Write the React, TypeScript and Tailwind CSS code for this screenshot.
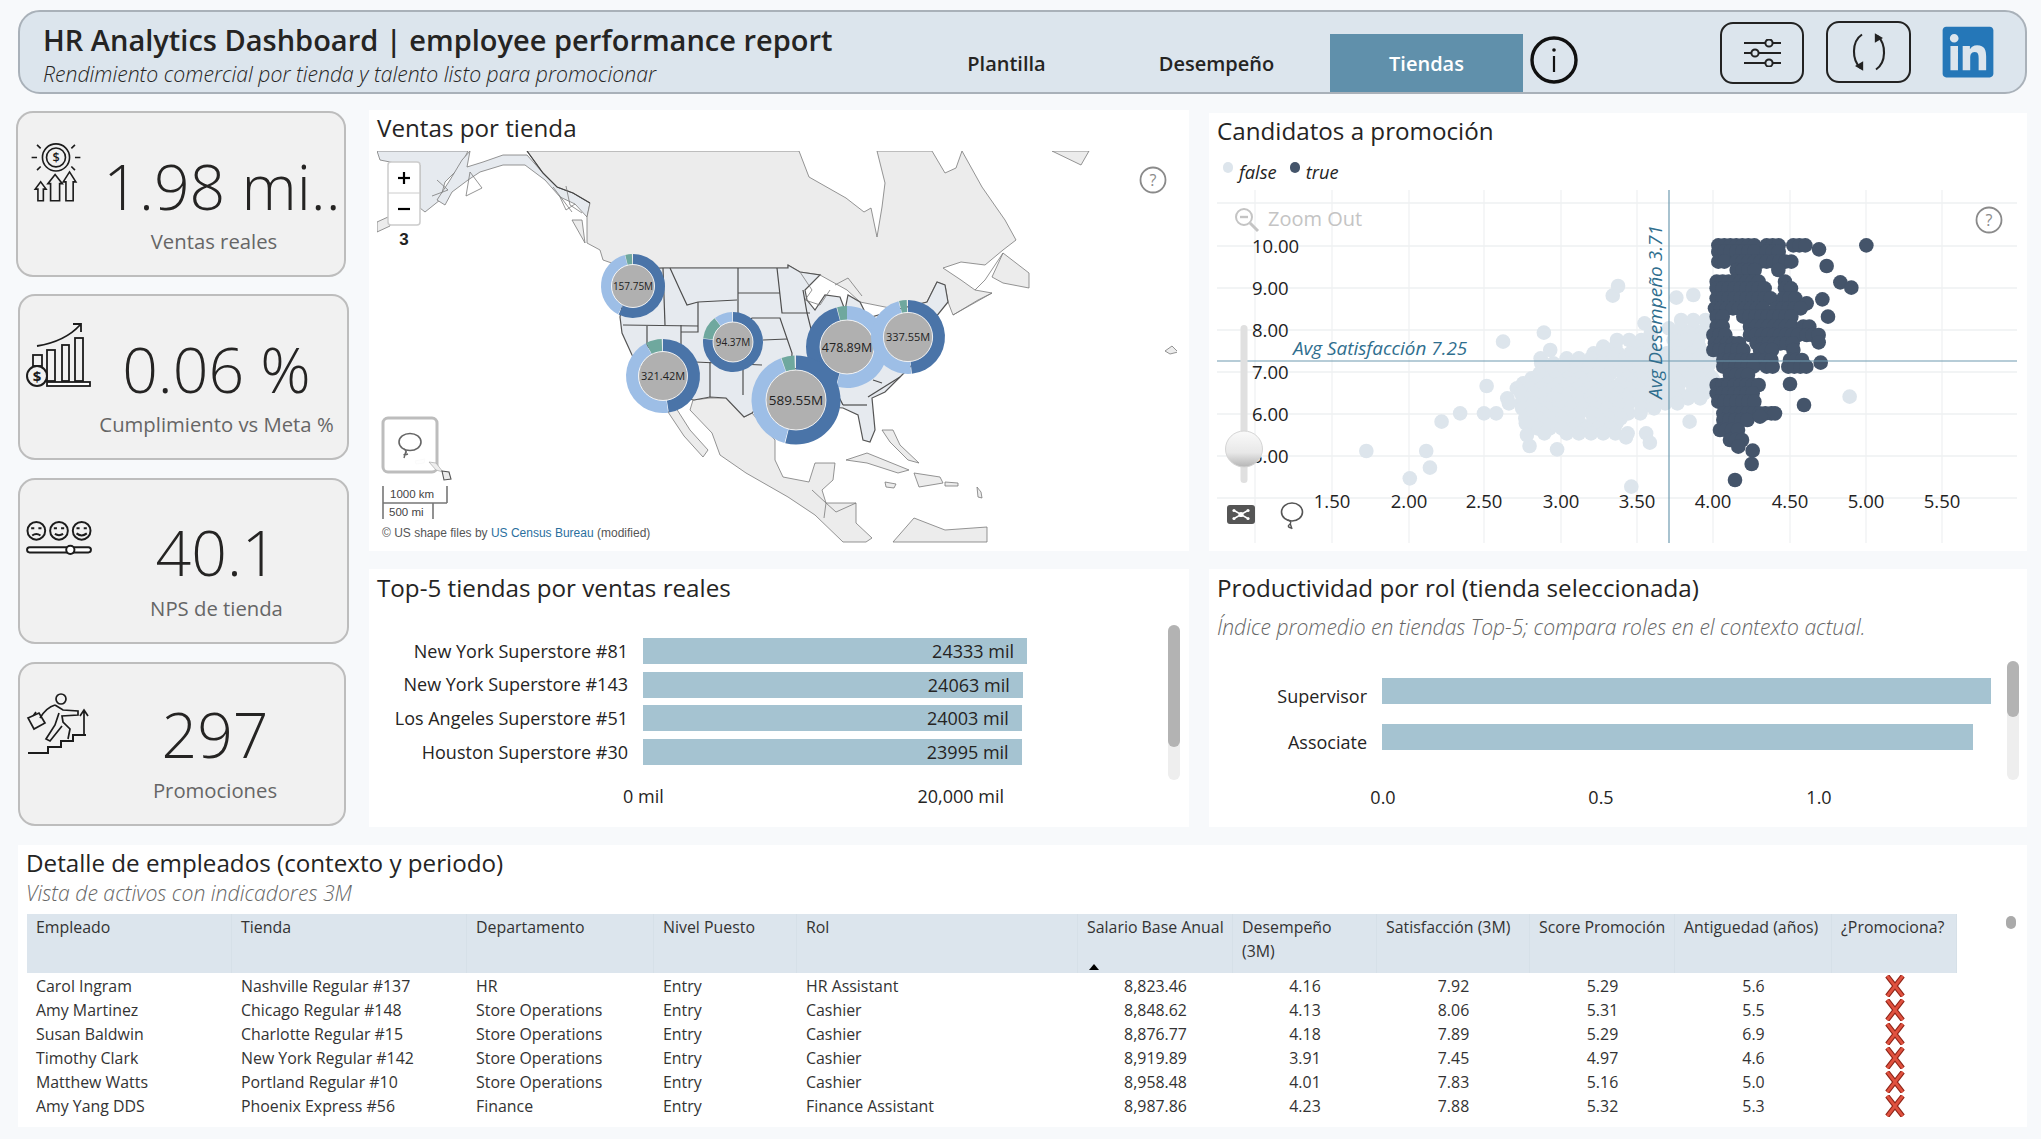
import { FaLinkedin } from "react-icons/fa";

const land = "#ececec";
const states = "#e6eaef";
const coast = "#7a7a7a";

const canada =
  "527,151 543,173 557,187 573,193 590,203 587,217 587,243 600,250 603,260 623,267 663,268 788,268 788,265 800,272 820,275 847,290 860,302 875,305 900,310 927,302 937,282 945,285 948,302 953,315 992,293 975,290 961,280 943,268 961,262 985,265 1003,250 1016,240 1005,220 982,187 962,151 956,168 945,173 932,151 877,151 885,183 882,207 877,237 871,208 864,212 846,198 809,177 799,151";
const alaska =
  "377,151 468,151 460,167 445,182 440,200 425,212 420,208 420,165 395,163 380,160";
const panhandle =
  "470,151 467,167 483,162 503,155 527,155 543,173 557,187 573,193 590,203 587,217 575,204 560,197 545,180 525,165 503,165 480,172 468,180 452,192 445,205 437,200 450,180 462,160";
const conus =
  "663,268 788,268 788,265 800,272 820,275 805,290 807,300 815,310 825,295 840,297 845,310 848,295 860,302 868,318 895,310 927,302 937,282 945,285 948,302 935,318 928,340 912,365 900,377 885,392 872,398 875,430 870,442 863,440 858,415 843,408 800,405 790,410 760,405 752,413 744,417 726,398 710,397 694,400 665,395 650,380 632,355 622,333 620,317 625,290 630,270";
const mexico =
  "693,400 710,398 726,398 744,417 752,413 775,440 775,460 783,477 809,482 815,463 835,463 833,480 822,490 826,503 856,503 856,523 872,538 866,542 843,542 815,515 788,497 746,473 720,455 712,433 690,410";
const baja = "668,412 676,408 690,430 708,450 703,457 684,436";
const islands = [
  "846,460 867,453 909,470 898,473 867,463",
  "914,473 940,477 943,483 919,487",
  "945,482 958,483 958,486 945,486",
  "885,482 896,484 894,488 886,487",
  "882,430 893,430 900,445 919,463 908,460 890,442",
  "977,487 981,492 982,498 978,497",
  "893,542 914,518 945,530 987,527 987,542",
  "1003,253 1029,273 1029,288 1003,283 992,277",
  "1052,151 1081,165 1089,151",
  "1165,351 1172,346 1178,352 1170,354",
  "572,220 582,220 585,243",
  "377,222 388,217 390,226 377,232",
];
const stateLines = [
  "623,325 698,326",
  "647,326 647,345 690,400",
  "663,268 665,325",
  "670,268 680,290 687,305 698,302",
  "698,302 737,300",
  "698,302 698,332 681,332",
  "681,325 681,362 695,362 762,365",
  "738,268 738,330 752,318 780,318 792,353 790,410",
  "738,293 780,293",
  "777,268 782,313 810,313",
  "763,340 787,339",
  "710,362 710,397",
  "743,363 743,395",
  "803,290 807,313 815,345 825,370 843,405",
  "900,377 868,397",
  "873,380 882,383",
  "843,405 867,405",
  "790,370 860,355 905,350",
  "830,318 835,345",
  "880,318 885,340 925,325",
];
const fjords = [
  "560,197 566,210 575,204",
  "566,186 570,205 582,213",
  "553,187 572,212",
  "470,172 482,188 466,196 470,172",
  "437,180 448,190 432,196",
  "800,272 812,290 805,300 820,305 830,290",
  "835,285 848,278 862,296",
  "1003,253 985,280 975,290",
  "953,315 978,300 992,293",
];

type Slice = { to: number; fill: string };
const dark = "#4a74a8";
const light = "#9dbee6";
const teal = "#6fa89e";

const donuts: { cx: number; cy: number; r: number; r0: number; label: string; size: number; slices: Slice[] }[] = [
  { cx: 633, cy: 286, r: 32, r0: 21.5, label: "157.75M", size: 10, slices: [{ to: 207, fill: dark }, { to: 345, fill: light }, { to: 358, fill: teal }] },
  { cx: 733, cy: 342, r: 30, r0: 20, label: "94.37M", size: 10, slices: [{ to: 276, fill: dark }, { to: 322, fill: teal }, { to: 358, fill: light }] },
  { cx: 663, cy: 376, r: 37, r0: 24.5, label: "321.42M", size: 11, slices: [{ to: 171, fill: dark }, { to: 332, fill: light }, { to: 358, fill: teal }] },
  { cx: 847, cy: 347, r: 41, r0: 27, label: "478.89M", size: 12.5, slices: [{ to: 195, fill: light }, { to: 345, fill: dark }, { to: 360, fill: teal }] },
  { cx: 908, cy: 337, r: 37, r0: 24.6, label: "337.55M", size: 11, slices: [{ to: 174, fill: dark }, { to: 345, fill: light }, { to: 358, fill: teal }] },
  { cx: 796, cy: 400, r: 44.5, r0: 30, label: "589.55M", size: 13.5, slices: [{ to: 194, fill: dark }, { to: 340, fill: light }, { to: 358, fill: teal }] },
];

function polar(cx: number, cy: number, r: number, deg: number) {
  const a = ((deg - 90) * Math.PI) / 180;
  return `${cx + r * Math.cos(a)} ${cy + r * Math.sin(a)}`;
}

function sector(cx: number, cy: number, r: number, r0: number, from: number, to: number) {
  const big = to - from > 180 ? 1 : 0;
  return `M${polar(cx, cy, r, from)} A${r} ${r} 0 ${big} 1 ${polar(cx, cy, r, to)} L${polar(cx, cy, r0, to)} A${r0} ${r0} 0 ${big} 0 ${polar(cx, cy, r0, from)} Z`;
}

function MapChart() {
  return (
    <svg viewBox="377 151 800 392" className="ml-[8px] mt-[6px] block h-[392px] w-[800px]">
      <polygon points={alaska} fill={states} stroke={coast} strokeWidth="0.8" />
      <polygon points={panhandle} fill={states} stroke={coast} strokeWidth="0.8" />
      <polygon points={canada} fill={land} stroke={coast} strokeWidth="0.8" />
      <polyline points="527,151 543,173 557,187 573,193 590,203" fill="none" stroke="#444" strokeWidth="1.2" />
      <polygon points={mexico} fill={land} stroke={coast} strokeWidth="0.8" />
      <polygon points={baja} fill={land} stroke={coast} strokeWidth="0.8" />
      <polygon points={conus} fill={states} stroke="#555" strokeWidth="1.2" />
      {islands.map((p) => (
        <polygon key={p} points={p} fill={land} stroke={coast} strokeWidth="0.8" />
      ))}
      {stateLines.map((p) => (
        <polyline key={p} points={p} fill="none" stroke="#4d4d4d" strokeWidth="1.2" />
      ))}
      {fjords.map((p) => (
        <polyline key={p} points={p} fill="none" stroke={coast} strokeWidth="0.8" />
      ))}
      <polyline points="826,503 836,512 856,503" fill="none" stroke={coast} strokeWidth="0.8" />
      <polyline points="812,490 826,503 824,518" fill="none" stroke={coast} strokeWidth="0.8" />

      {donuts.map((d) => {
        let from = 0;
        return (
          <g key={d.label}>
            {d.slices.map((s) => {
              const path = sector(d.cx, d.cy, d.r, d.r0, from, s.to);
              from = s.to + 1;
              return <path key={s.to} d={path} fill={s.fill} />;
            })}
            <circle cx={d.cx} cy={d.cy} r={d.r0} fill="#b0b0b0" stroke="#fff" strokeWidth="0.8" />
            <text x={d.cx} y={d.cy + d.size * 0.36} textAnchor="middle" fontSize={d.size} fill="#222">
              {d.label}
            </text>
          </g>
        );
      })}

      <rect x="388" y="162" width="32" height="63" rx="3" fill="#fff" stroke="#ccc" strokeWidth="1.5" />
      <line x1="388" y1="193" x2="420" y2="193" stroke="#ccc" />
      <line x1="398" y1="178" x2="410" y2="178" stroke="#000" strokeWidth="2.2" />
      <line x1="404" y1="172" x2="404" y2="184" stroke="#000" strokeWidth="2.2" />
      <line x1="398" y1="209" x2="410" y2="209" stroke="#000" strokeWidth="2.2" />
      <text x="404" y="245" textAnchor="middle" fontSize="17" fontWeight="700" fill="#222" className="font-['Liberation_Sans',sans-serif]">
        3
      </text>

      <polygon points="415,461 425,459 424,463 416,464" fill="#f4f4f4" stroke="#bbb" strokeWidth="0.7" />
      <rect x="383" y="418" width="54" height="54" rx="5" fill="#fff" fillOpacity="0.9" stroke="#bdbdbd" strokeWidth="3" />
      <ellipse cx="410" cy="442" rx="11" ry="8.5" fill="none" stroke="#666" strokeWidth="1.6" />
      <path d="M404 449 q4 3 1 5 q-3 2 3 0 M406 451 l-2 7" fill="none" stroke="#666" strokeWidth="1.4" />
      <polygon points="429,462 436,463 443,472 436,470" fill="#eee" stroke="#aaa" strokeWidth="0.7" />
      <polygon points="442,471 449,472 451,479 444,480" fill={land} stroke="#555" strokeWidth="1.1" />

      <path d="M383 486 V519 M383 503 H447 M447 486 V503 M433 503 V519" fill="none" stroke="#777" strokeWidth="1.6" />
      <g fontSize="11.5" fill="#444" className="font-['Liberation_Sans',sans-serif]">
        <text x="390" y="498">1000 km</text>
        <text x="389" y="516">500 mi</text>
      </g>
      <text x="382" y="537" fontSize="12" fill="#555" className="font-['Liberation_Sans',sans-serif]">
        © US shape files by <tspan fill="#2a6f9e">US Census Bureau</tspan> (modified)
      </text>

      <Help cx={1153} cy={180} />
    </svg>
  );
}

function Help({ cx, cy }: { cx: number; cy: number }) {
  return (
    <g>
      <circle cx={cx} cy={cy} r="12.5" fill="#fff" stroke="#8a8a8a" strokeWidth="1.8" />
      <text x={cx} y={cy + 6} textAnchor="middle" fontSize="16" fill="#8a8a8a">
        ?
      </text>
    </g>
  );
}

type Span = [number, number, number];

// blobs of points, read off the reference and filled along rows
const lightSpans: Span[] = [
  [510, 880, 940], [535, 860, 940], [550, 830, 830], [550, 880, 940], [570, 770, 830], [570, 880, 940], [590, 750, 840],
  [590, 870, 940], [610, 720, 940], [625, 630, 650], [625, 680, 950], [640, 625, 950], [655, 640, 950], [670, 630, 950],
  [685, 610, 950], [700, 590, 950], [715, 575, 950], [730, 580, 950], [745, 570, 930], [760, 570, 900], [775, 590, 850],
  [790, 510, 550], [790, 600, 820], [805, 600, 790], [820, 600, 780], [835, 620, 770], [850, 640, 790], [850, 820, 820],
];
const lightSingles = [
  [760, 437], [770, 408], [630, 548], [553, 575], [522, 708], [437, 815], [472, 790], [295, 903], [408, 903],
  [415, 953], [377, 985], [795, 1010], [655, 898], [603, 888], [830, 878], [905, 815], [1207, 740], [880, 443], [912, 435],
  [820, 520], [642, 600], [596, 820], [598, 855], [785, 862],
];
const darkSpans: Span[] = [
  [76, 175, 290], [76, 320, 370], [76, 400, 450], [95, 175, 290], [95, 320, 370], [125, 175, 195], [125, 230, 320],
  [125, 340, 405], [150, 230, 300], [150, 355, 355], [185, 170, 300], [185, 375, 375], [205, 170, 320], [205, 375, 405],
  [235, 170, 340], [235, 370, 420], [250, 440, 440], [265, 165, 320], [265, 350, 430], [290, 170, 200], [290, 250, 400],
  [320, 170, 195], [320, 270, 400], [320, 430, 460], [345, 160, 205], [345, 270, 420], [345, 440, 490], [370, 165, 240],
  [370, 290, 400], [390, 160, 250], [390, 300, 350], [390, 400, 400], [420, 190, 340], [420, 390, 430], [440, 190, 290],
  [440, 320, 340], [440, 385, 440], [465, 210, 280], [495, 170, 300], [520, 170, 290], [545, 175, 300], [580, 190, 340],
  [600, 190, 270], [630, 180, 250], [660, 210, 260],
];
const darkSingles = [
  [619, 76], [477, 88], [500, 138], [541, 187], [574, 203], [487, 238], [504, 290], [432, 555], [390, 492], [278, 692],
  [275, 732], [225, 780], [482, 428], [476, 367], [345, 580], [300, 590], [235, 680],
];

function fill(spans: Span[], step: number, jitter = 0) {
  const out: number[][] = [];
  let n = 0;
  for (const [y, a, b] of spans) {
    for (let x = a; x <= b; x += step) {
      n += 1;
      out.push([x + (jitter ? ((n * 37) % (jitter * 2 + 1)) - jitter : 0), y]);
    }
  }
  return out;
}

const lightPts = [...fill(lightSpans, 24, 9), ...lightSingles].map(([x, y]) => [1210 + x / 1.887, 150 + y / 3]);
const darkPts = [...fill(darkSpans, 18), ...darkSingles].map(([x, y]) => [1660 + x / 3, 220 + y / 3]);

const xTicks = [
  { x: 1332, t: "1.50" }, { x: 1409, t: "2.00" }, { x: 1484, t: "2.50" }, { x: 1561, t: "3.00" },
  { x: 1637, t: "3.50" }, { x: 1713, t: "4.00" }, { x: 1790, t: "4.50" }, { x: 1866, t: "5.00" }, { x: 1942, t: "5.50" },
];
const yTicks = [
  { y: 246, t: "10.00" }, { y: 288, t: "9.00" }, { y: 330, t: "8.00" }, { y: 372, t: "7.00" },
  { y: 414, t: "6.00" }, { y: 456, t: "5.00" },
];

function ScatterChart() {
  return (
    <svg viewBox="1209 190 818 361" className="mt-[5px] block h-[361px] w-[818px]">
      <defs>
        <linearGradient id="thumb" x1="0" y1="0" x2="0" y2="1">
          <stop offset="0" stopColor="#fafafa" />
          <stop offset="0.6" stopColor="#e8e8e8" />
          <stop offset="1" stopColor="#b5b5b5" />
        </linearGradient>
      </defs>
      {[1255, ...xTicks.map((t) => t.x)].map((x) => (
        <line key={x} x1={x} y1="190" x2={x} y2="543" stroke="#eef0f2" strokeWidth="1.2" />
      ))}
      {[203, 498, ...yTicks.map((t) => t.y)].map((y) => (
        <line key={y} x1="1217" y1={y} x2="2017" y2={y} stroke="#eef0f2" strokeWidth="1.6" />
      ))}
      {lightPts.map(([x, y], i) => (
        <circle key={i} cx={x} cy={y} r="7.3" fill="#dde5ec" />
      ))}
      {darkPts.map(([x, y], i) => (
        <circle key={i} cx={x} cy={y} r="7.3" fill="#44546a" />
      ))}
      <line x1="1669" y1="190" x2="1669" y2="543" stroke="#6e9ab0" strokeWidth="1.2" />
      <line x1="1217" y1="361" x2="2017" y2="361" stroke="#6e9ab0" strokeWidth="1.2" />
      <text x="1293" y="355" fontSize="18.9" fontStyle="italic" fill="#2f6e8e">
        Avg Satisfacción 7.25
      </text>
      <text
        transform="translate(1662 399) rotate(-90)"
        fontSize="18"
        fontStyle="italic"
        fill="#2f6e8e"
        textLength="174"
        lengthAdjust="spacingAndGlyphs"
      >
        Avg Desempeño 3.71
      </text>

      {yTicks.map((t) => (
        <text key={t.t} x="1252" y={t.y + 7} fontSize="18.5" fill="#222">
          {t.t}
        </text>
      ))}
      {xTicks.map((t) => (
        <text key={t.t} x={t.x} y="508" textAnchor="middle" fontSize="18.5" fill="#222">
          {t.t}
        </text>
      ))}

      <circle cx="1244" cy="217" r="8" fill="none" stroke="#c4c4c4" strokeWidth="2" />
      <line x1="1240" y1="217" x2="1248" y2="217" stroke="#c4c4c4" strokeWidth="2.4" />
      <line x1="1250" y1="223" x2="1258" y2="231" stroke="#c4c4c4" strokeWidth="3" />
      <text x="1268" y="226" fontSize="20" fill="#c4c4c4">
        Zoom Out
      </text>
      <Help cx={1989} cy={220} />

      <rect x="1240.5" y="325" width="7" height="158" rx="3.5" fill="#e0e0e0" />
      <ellipse cx="1244" cy="449" rx="18.5" ry="18" fill="url(#thumb)" stroke="#d5d5d5" />

      <rect x="1227" y="505" width="28" height="19" rx="3" fill="#555" />
      <path d="M1235 511 L1241 514.5 L1247 511 M1235 518 L1241 514.5 L1247 518" fill="none" stroke="#fff" strokeWidth="1.5" />
      <circle cx="1241" cy="514.5" r="2.6" fill="#fff" />
      <circle cx="1234" cy="510.5" r="1.6" fill="#fff" />
      <circle cx="1248" cy="510.5" r="1.6" fill="#fff" />
      <circle cx="1234" cy="518.5" r="1.6" fill="#fff" />
      <circle cx="1248" cy="518.5" r="1.6" fill="#fff" />
      <ellipse cx="1292" cy="512" rx="10.5" ry="9" fill="none" stroke="#555" strokeWidth="1.6" />
      <path d="M1288 520 q5 2 1 5 q-2 2 2 3 M1290 523 l2 6" fill="none" stroke="#555" strokeWidth="1.4" />
    </svg>
  );
}

function CoinIcon() {
  return (
    <svg viewBox="0 0 62 68" className="h-[66px] w-[56px]" fill="none" stroke="#1c1c1c" strokeWidth="1.8">
      <circle cx="31" cy="19" r="15" />
      <circle cx="31" cy="19" r="10.5" />
      <text x="31" y="24.5" textAnchor="middle" fontSize="14" fontWeight="600" fill="#1c1c1c" stroke="none">
        $
      </text>
      <path d="M4 19 H10 M52 19 H58 M10 5 L14 9 M52 5 L48 9 M10 33 L14 29 M52 33 L48 29" />
      <path d="M11 67 V54 H8 L14 46 L20 54 H17 V67 Z" />
      <path d="M25 67 V48 H22 L30 38 L38 48 H35 V67 Z" />
      <path d="M42 67 V46 H39 L46 35 L53 46 H50 V67 Z" />
    </svg>
  );
}

function GrowthIcon() {
  return (
    <svg viewBox="0 0 66 66" className="h-[66px] w-[66px]" fill="none" stroke="#1c1c1c" strokeWidth="1.8">
      <path d="M11 24 C30 21 44 14 54 3 M47 2 H55 V10" />
      <rect x="21" y="28" width="8" height="31" />
      <rect x="36" y="23" width="7" height="36" />
      <rect x="49" y="16" width="8" height="43" />
      <rect x="21" y="60" width="43" height="4" fill="#fff" />
      <rect x="7" y="33" width="9" height="11" />
      <circle cx="11" cy="54" r="10" strokeWidth="2" />
      <text x="11" y="60" textAnchor="middle" fontSize="15" fontWeight="700" fill="#1c1c1c" stroke="none">
        $
      </text>
    </svg>
  );
}

function FaceIcon({ cx, mouth }: { cx: number; mouth: string }) {
  return (
    <g>
      <circle cx={cx} cy="10" r="8.6" />
      <path d={`M${cx - 5} 7.5 h3 M${cx + 2} 7.5 h3`} />
      <path d={mouth} />
    </g>
  );
}

function NpsIcon() {
  return (
    <svg viewBox="0 0 66 34" className="h-[36px] w-[68px]" fill="none" stroke="#1c1c1c" strokeWidth="1.9">
      <FaceIcon cx={11} mouth="M7 14.5 q4 -3 8 0" />
      <FaceIcon cx={33} mouth="M29 13 q4 2.5 8 0" />
      <FaceIcon cx={55} mouth="M50 12.5 q5 4 10 0" />
      <rect x="2" y="26" width="62" height="5" rx="2.5" fill="#fff" />
      <circle cx="44" cy="28.5" r="4" fill="#fff" />
    </svg>
  );
}

function ClimbIcon() {
  return (
    <svg viewBox="0 0 66 66" className="h-[66px] w-[66px]" fill="none" stroke="#1c1c1c" strokeWidth="1.7">
      <circle cx="35" cy="6" r="5" />
      <path d="M2 60 H22 V54 H35 V48 H47 V42 H60" strokeWidth="2" />
      <path d="M58 42 V18 M54 23 L58 17 L62 23" />
      <path d="M29 12 C22 14 17 20 14 25 M29 12 L37 17 L52 18 V22 L36 23 L37 29 L44 36 L42 46 M33 20 L29 32 L20 46 L24 48 L36 33" />
      <path d="M2 25 L13 20 L19 30 L8 36 Z M7 23 L10 19" />
    </svg>
  );
}

type KpiProps = {
  icon: React.ReactNode;
  iconClass: string;
  value: string;
  label: string;
  cardClass: string;
  valueClass?: string;
};

function Kpi({ icon, iconClass, value, label, cardClass, valueClass }: KpiProps) {
  return (
    <div className={`box-border flex rounded-[17px] border-2 border-[#bdbdbd] bg-[#f1f1f1] ${cardClass}`}>
      <div className={`w-[82px] shrink-0 ${iconClass}`}>{icon}</div>
      <div className="flex min-w-0 flex-1 flex-col items-center pr-[16px] pt-[33px]">
        <div className={`whitespace-nowrap text-[62.5px] font-light leading-[80px] text-[#252423] ${valueClass ?? ""}`}>
          {value}
        </div>
        <div className="mt-px whitespace-nowrap text-[20.3px] leading-[28px] text-[#666]">{label}</div>
      </div>
    </div>
  );
}

const topStores = [
  { name: "New York Superstore #81", value: 24333 },
  { name: "New York Superstore #143", value: 24063 },
  { name: "Los Angeles Superstore #51", value: 24003 },
  { name: "Houston Superstore #30", value: 23995 },
];

function PanelTitle({ children }: { children: string }) {
  return <h2 className="text-[24.2px] leading-[34px] text-[#252423]">{children}</h2>;
}

function ScrollBar({ thumb, className }: { thumb: string; className: string }) {
  return (
    <div className={`absolute w-[12px] rounded-full bg-[#eeeeee] ${className}`}>
      <div className={`w-[12px] rounded-full bg-[#b3b3b3] ${thumb}`} />
    </div>
  );
}

function TopStores() {
  return (
    <section className="relative mt-[18px] h-[258px] w-[820px] bg-white pl-[8px] pt-[2px]">
      <PanelTitle>Top-5 tiendas por ventas reales</PanelTitle>
      <div className="-ml-[8px] mt-[33px] flex flex-col gap-[7.7px]">
        {topStores.map((s) => (
          <div key={s.name} className="flex h-[26px] items-center text-[18px] text-[#252423]">
            <div className="w-[259px] whitespace-nowrap text-right">{s.name}</div>
            <div
              className="ml-[15px] box-border h-[26px] bg-[#a5c3d1] pr-[13px] text-right leading-[26px]"
              style={{ width: 384 * (s.value / 24333) }}
            >
              {s.value} mil
            </div>
          </div>
        ))}
      </div>
      <div className="-ml-[8px] mt-[18px] flex w-[635px] justify-between pl-[254px] text-[18px] leading-[26px] text-[#252423]">
        <span>0 mil</span>
        <span>20,000 mil</span>
      </div>
      <ScrollBar className="left-[799px] top-[56px] h-[155px]" thumb="h-[122px]" />
    </section>
  );
}

const roles = [
  { name: "Supervisor", width: 609 },
  { name: "Associate", width: 591 },
];

function RoleProductivity() {
  return (
    <section className="relative mt-[18px] h-[258px] w-[818px] bg-white pl-[8px] pt-[2px]">
      <PanelTitle>Productividad por rol (tienda seleccionada)</PanelTitle>
      <p className="mt-[9px] whitespace-nowrap text-[21.1px] font-light italic leading-[26px] text-[#666]">
        Índice promedio en tiendas Top-5; compara roles en el contexto actual.
      </p>
      <div className="-ml-[8px] mt-[38px] flex flex-col gap-[20px]">
        {roles.map((r) => (
          <div key={r.name} className="flex h-[26px] items-center text-[18px] text-[#252423]">
            <div className="w-[158px] pt-[10px] text-right">{r.name}</div>
            <div className="ml-[15px] h-[26px] bg-[#a5c3d1]" style={{ width: r.width }} />
          </div>
        ))}
      </div>
      <div className="-ml-[8px] mt-[34px] grid w-[719px] grid-cols-3 pl-[65px] text-center text-[18px] leading-[26px] text-[#252423]">
        <span>0.0</span>
        <span>0.5</span>
        <span>1.0</span>
      </div>
      <ScrollBar className="left-[798px] top-[92px] h-[119px]" thumb="h-[56px]" />
    </section>
  );
}

const columns = [
  "Empleado",
  "Tienda",
  "Departamento",
  "Nivel Puesto",
  "Rol",
  "Salario Base Anual",
  "Desempeño\n(3M)",
  "Satisfacción (3M)",
  "Score Promoción",
  "Antiguedad (años)",
  "¿Promociona?",
];

const rows = [
  ["Carol Ingram", "Nashville Regular #137", "HR", "Entry", "HR Assistant", "8,823.46", "4.16", "7.92", "5.29", "5.6"],
  ["Amy Martinez", "Chicago Regular #148", "Store Operations", "Entry", "Cashier", "8,848.62", "4.13", "8.06", "5.31", "5.5"],
  ["Susan Baldwin", "Charlotte Regular #15", "Store Operations", "Entry", "Cashier", "8,876.77", "4.18", "7.89", "5.29", "6.9"],
  ["Timothy Clark", "New York Regular #142", "Store Operations", "Entry", "Cashier", "8,919.89", "3.91", "7.45", "4.97", "4.6"],
  ["Matthew Watts", "Portland Regular #10", "Store Operations", "Entry", "Cashier", "8,958.48", "4.01", "7.83", "5.16", "5.0"],
  ["Amy Yang DDS", "Phoenix Express #56", "Finance", "Entry", "Finance Assistant", "8,987.86", "4.23", "7.88", "5.32", "5.3"],
];

const tableGrid = "grid grid-cols-[205px_235px_187px_143px_281px_155px_144px_153px_145px_157px_125px]";

function RedCross() {
  return (
    <svg viewBox="0 0 22 24" className="mx-auto mt-px block h-[22px] w-[22px]" fill="none">
      <path d="M2.5 1 L19.5 23 M19.5 1 L2.5 23" stroke="#8f2417" strokeWidth="5.4" />
      <path d="M2.5 1 L19.5 23 M19.5 1 L2.5 23" stroke="#e0513f" strokeWidth="3" />
    </svg>
  );
}

function EmployeeTable() {
  return (
    <section className="relative ml-[18px] mt-[18px] h-[282px] w-[2009px] bg-white pl-[8px] pt-px">
      <PanelTitle>Detalle de empleados (contexto y periodo)</PanelTitle>
      <p className="whitespace-nowrap text-[21.2px] font-light italic leading-[26px] text-[#666]">
        Vista de activos con indicadores 3M
      </p>
      <div className={`${tableGrid} ml-px mt-[8px] h-[59px] w-[1930px] bg-[#dce5ed] text-[15.9px] leading-[24px] text-[#333]`}>
        {columns.map((c) => (
          <div key={c} className="relative whitespace-pre-line border-r border-[#d6e0e8] pl-[9px] pt-[1px]">
            {c}
            {c === "Salario Base Anual" && (
              <span className="absolute bottom-[3px] left-[11px] h-0 w-0 border-x-[5px] border-b-[6px] border-x-transparent border-b-black" />
            )}
          </div>
        ))}
      </div>
      <div className="ml-px mt-[1px] w-[1930px] text-[15.9px] leading-[24px] text-[#333]">
        {rows.map((r) => (
          <div key={r[0]} className={`${tableGrid} h-[24px]`}>
            {r.map((cell, i) => (
              <div key={i} className={i < 5 ? "whitespace-nowrap pl-[9px]" : "text-center"}>
                {cell}
              </div>
            ))}
            <div>
              <RedCross />
            </div>
          </div>
        ))}
      </div>
      <div className="absolute left-[1988px] top-[71px] h-[13px] w-[10px] rounded-full bg-[#aaaaaa]" />
    </section>
  );
}

export default function App() {
  return (
    <div className="h-[1139px] w-[2041px] overflow-hidden bg-[#f7f9fb] pt-[10px] font-['Open_Sans',sans-serif]">
      <header className="ml-[18px] box-border flex h-[84px] w-[2009px] rounded-[22px] border-2 border-[#a9b1b9] bg-[#dce5ed]">
        <div className="w-[890px] shrink-0 pl-[23px] pt-[9px] text-[#252423]">
          <h1 className="whitespace-nowrap text-[29px] font-semibold leading-[38px]">
            HR Analytics Dashboard | employee performance report
          </h1>
          <p className="mt-px whitespace-nowrap text-[21.2px] font-light italic leading-[28px]">
            Rendimiento comercial por tienda y talento listo para promocionar
          </p>
        </div>
        <nav className="flex h-[58px] gap-[17px] self-end text-[20px] font-semibold">
          <div className="flex w-[193px] items-center justify-center pt-[2px] text-[#252423]">Plantilla</div>
          <div className="flex w-[193px] items-center justify-center pt-[2px] text-[#252423]">Desempeño</div>
          <div className="flex w-[193px] items-center justify-center bg-[#6090ab] pt-[2px] text-white">Tiendas</div>
        </nav>
        <svg viewBox="0 0 48 48" className="ml-[7px] mt-[24px] h-[48px] w-[48px]" fill="none" stroke="#111">
          <circle cx="24" cy="24" r="22" strokeWidth="3.4" />
          <circle cx="24" cy="14" r="1.8" fill="#111" stroke="none" />
          <line x1="24" y1="20" x2="24" y2="36" strokeWidth="2.2" />
        </svg>
        <button className="ml-[142px] mt-[10px] box-border flex h-[62px] w-[84px] items-center justify-center rounded-[13px] border-2 border-[#222]">
          <svg viewBox="0 0 38 28" className="h-[28px] w-[38px]" fill="none" stroke="#222" strokeWidth="2">
            <path d="M1 4 H38 M1 14 H38 M1 24 H38" />
            <circle cx="26" cy="4" r="3.6" fill="#dce5ed" />
            <circle cx="12" cy="14" r="3.6" fill="#dce5ed" />
            <circle cx="26" cy="24" r="3.6" fill="#dce5ed" />
          </svg>
        </button>
        <button className="ml-[22px] mt-[9px] box-border flex h-[62px] w-[85px] items-center justify-center rounded-[13px] border-2 border-[#222]">
          <svg viewBox="0 0 36 36" className="h-[42px] w-[42px]" fill="none" stroke="#222" strokeWidth="1.8">
            <path d="M12 3 C3 9 3 25 11 32" />
            <path d="M24 33 C33 27 33 11 25 4" />
            <path d="M6 30 L13 34 L13 26 Z M30 6 L23 2 L23 10 Z" fill="#222" stroke="none" />
          </svg>
        </button>
        <FaLinkedin className="ml-[28px] mt-[11px] h-[58px] w-[58px] text-[#2577b8]" />
      </header>

      <div className="mt-[16px] flex h-[717px]">
        <div className="w-[369px] shrink-0 pt-[1px]">
          <Kpi
            cardClass="ml-[16px] h-[166px] w-[330px]"
            iconClass="pl-[10px] pt-[25px]"
            icon={<CoinIcon />}
            value="1.98 mi.."
            valueClass="ml-[16px]"
            label="Ventas reales"
          />
          <Kpi
            cardClass="ml-[18px] mt-[17px] h-[166px] w-[331px]"
            iconClass="pl-[6px] pt-[26px]"
            icon={<GrowthIcon />}
            value="0.06 %"
            label="Cumplimiento vs Meta %"
          />
          <Kpi
            cardClass="ml-[18px] mt-[18px] h-[166px] w-[331px]"
            iconClass="pl-[5px] pt-[40px]"
            icon={<NpsIcon />}
            value="40.1"
            valueClass="-mt-px mb-px"
            label="NPS de tienda"
          />
          <Kpi
            cardClass="ml-[18px] mt-[18px] h-[164px] w-[328px]"
            iconClass="pl-[6px] pt-[29px]"
            icon={<ClimbIcon />}
            value="297"
            valueClass="-mt-[3px] mb-px"
            label="Promociones"
          />
        </div>

        <div className="w-[820px] shrink-0">
          <section className="h-[441px] w-[820px] bg-white pt-px">
            <div className="pl-[8px]">
              <PanelTitle>Ventas por tienda</PanelTitle>
            </div>
            <MapChart />
          </section>
          <TopStores />
        </div>

        <div className="ml-[20px] w-[818px] shrink-0 pt-[3px]">
          <section className="h-[438px] w-[818px] bg-white pt-px">
            <div className="pl-[8px]">
              <PanelTitle>Candidatos a promoción</PanelTitle>
            </div>
            <div className="mt-[12px] flex h-[24px] pl-[14px] text-[18.3px] italic leading-[24px] text-[#252423]">
              <span className="mt-[2px] h-[11px] w-[10px] rounded-full bg-[#dde5ec]" />
              <span className="ml-[6px]">false</span>
              <span className="ml-[13px] mt-[2px] h-[11px] w-[10px] rounded-full bg-[#44546a]" />
              <span className="ml-[6px]">true</span>
            </div>
            <div className="pt-px">
              <ScatterChart />
            </div>
          </section>
          <RoleProductivity />
        </div>
      </div>

      <EmployeeTable />
    </div>
  );
}
